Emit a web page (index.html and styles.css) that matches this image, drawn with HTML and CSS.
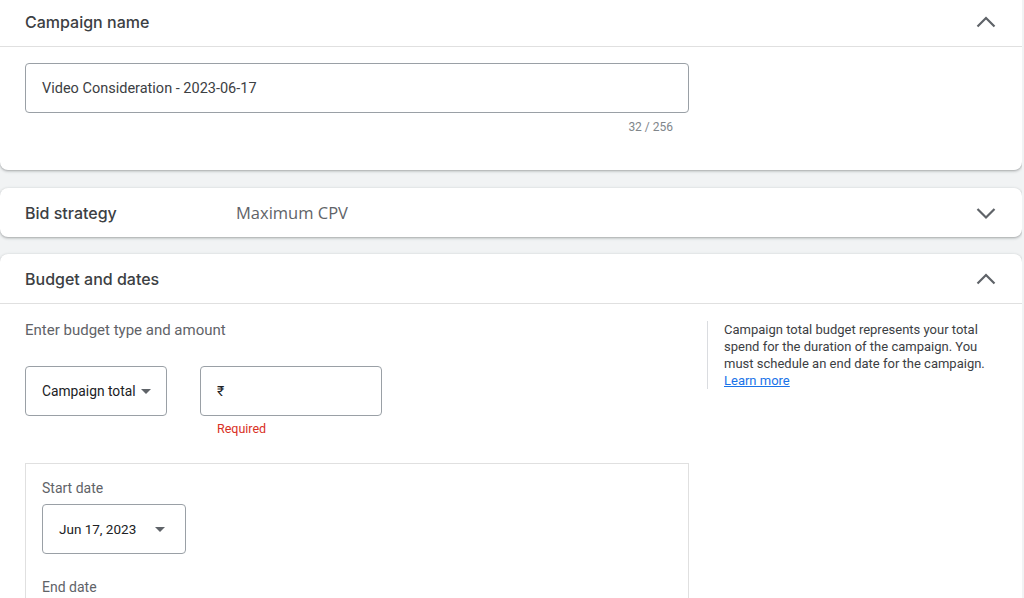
FILE: index.html
```html
<!DOCTYPE html>
<html>
<head>
<meta charset="utf-8">
<link rel="stylesheet" href="styles.css">
</head>
<body>
<div class="page">
  <section class="card card-first">
    <div class="card-head with-divider">
      <h2 class="title">Campaign name</h2>
      <svg class="chev" viewBox="0 0 24 24"><path d="M3.5 16.5L12 8l8.5 8.5"/></svg>
    </div>
    <div class="card-body name-body">
      <div class="field-wide">
        <div class="textbox">Video Consideration - 2023-06-17</div>
        <div class="counter">32 / 256</div>
      </div>
    </div>
  </section>

  <section class="card">
    <div class="card-head head-compact">
      <h2 class="title title-fixed">Bid strategy</h2>
      <span class="summary">Maximum CPV</span>
      <svg class="chev" viewBox="0 0 24 24"><path d="M3.5 8L12 16.5 20.5 8"/></svg>
    </div>
  </section>

  <section class="card card-last">
    <div class="card-head with-divider">
      <h2 class="title">Budget and dates</h2>
      <svg class="chev" viewBox="0 0 24 24"><path d="M3.5 16.5L12 8l8.5 8.5"/></svg>
    </div>
    <div class="card-body budget-body">
      <div class="main-col">
        <div class="label">Enter budget type and amount</div>
        <div class="budget-row">
          <div class="select select-type">
            <span>Campaign total</span>
            <span class="caret"></span>
          </div>
          <div class="amount">
            <div class="textbox amount-box">₹</div>
            <div class="error">Required</div>
          </div>
        </div>
        <div class="dates">
          <div class="date-label">Start date</div>
          <div class="select select-date">
            <span>Jun 17, 2023</span>
            <span class="caret"></span>
          </div>
          <div class="date-label end-label">End date</div>
          <div class="end-option">Ends in</div>
        </div>
      </div>
      <aside class="note">
        Campaign total budget represents your total spend for the duration of the campaign. You must schedule an end date for the campaign.
        <a class="link" href="#">Learn more</a>
      </aside>
    </div>
  </section>
</div>
</body>
</html>
```

FILE: styles.css
```css
html, body {
  margin: 0;
  padding: 0;
  background: #f1f3f4;
  font-family: Roboto, "Liberation Sans", Arial, sans-serif;
  color: #3c4043;
}

.page {
  width: 1022px;
  display: flex;
  flex-direction: column;
  gap: 17px;
  height: 598px;
  overflow: hidden;
}

.card {
  background: #fff;
  border-radius: 8px;
  box-shadow: 0 1px 2px rgba(60, 64, 67, 0.3), 0 1px 3px 1px rgba(60, 64, 67, 0.12);
  flex-shrink: 0;
}

.card-first {
  margin-top: -3px;
  margin-bottom: 1px;
  border-radius: 0 0 8px 8px;
}

.card-last {
  border-radius: 8px 8px 0 0;
}

.card-head {
  height: 50px;
  box-sizing: border-box;
  display: flex;
  align-items: center;
  padding: 0 24px 0 25px;
}

.head-compact {
  height: 49px;
}

.with-divider {
  border-bottom: 1px solid #e0e0e0;
}

.title {
  margin: 0;
  font-family: Inter, "Open Sans", Roboto, sans-serif;
  font-size: 16px;
  font-weight: 500;
  color: #3c4043;
  letter-spacing: 0;
}

.title-fixed {
  width: 211px;
}

.summary {
  font-family: "Open Sans", Roboto, sans-serif;
  font-size: 16.5px;
  color: #5f6368;
}

.chev {
  width: 24px;
  height: 24px;
  fill: none;
  stroke: #5f6368;
  stroke-width: 2.2;
  margin-left: auto;
}

.card-body {
  padding: 16px 25px;
}

.name-body {
  padding-bottom: 35px;
}

.field-wide {
  width: 664px;
}

.textbox {
  height: 50px;
  box-sizing: border-box;
  border: 1px solid #9aa0a6;
  border-radius: 4px;
  display: flex;
  align-items: center;
  padding: 0 16px;
  font-size: 14.5px;
  color: #3c4043;
}

.counter {
  text-align: right;
  padding-right: 16px;
  margin-top: 6px;
  font-size: 12px;
  line-height: 16px;
  color: #80868b;
}

.budget-body {
  display: flex;
  gap: 18px;
  padding-bottom: 0;
}

.main-col {
  width: 664px;
  flex-shrink: 0;
}

.label {
  font-size: 15px;
  line-height: 20px;
  color: #5f6368;
}

.budget-row {
  display: flex;
  gap: 33px;
  margin-top: 26px;
  align-items: flex-start;
}

.select {
  height: 50px;
  box-sizing: border-box;
  border: 1px solid #9aa0a6;
  border-radius: 4px;
  display: flex;
  align-items: center;
  padding: 0 16px;
  font-size: 14px;
  color: #202124;
  white-space: nowrap;
}

.select-type {
  width: 142px;
  padding-right: 15px;
  font-size: 13.8px;
}

.caret {
  width: 0;
  height: 0;
  border-left: 5px solid transparent;
  border-right: 5px solid transparent;
  border-top: 5px solid #5f6368;
  margin-left: auto;
  flex-shrink: 0;
}

.amount {
  width: 182px;
}

.amount-box {
  color: #202124;
  font-size: 14px;
}

.error {
  margin-top: 5px;
  padding-left: 17px;
  font-size: 12.5px;
  line-height: 16px;
  color: #d93025;
}

.dates {
  margin-top: 26px;
  border: 1px solid #e0e0e0;
  border-bottom: none;
  padding: 14px 16px 40px;
}

.date-label {
  font-size: 14px;
  line-height: 20px;
  color: #5f6368;
}

.select-date {
  width: 144px;
  margin-top: 6px;
  font-size: 13.5px;
}

.select-date .caret {
  margin-right: 4px;
}

.end-label {
  margin-top: 23px;
}

.end-option {
  margin-top: 2px;
  padding-left: 46px;
  font-size: 14px;
  line-height: 20px;
  color: #3c4043;
}

.note {
  margin-top: 1px;
  border-left: 1px solid #dadce0;
  padding-left: 16px;
  font-size: 13px;
  line-height: 17px;
  color: #3c4043;
  width: 270px;
  align-self: flex-start;
}

.link {
  color: #1a73e8;
  text-decoration: underline;
}
```
